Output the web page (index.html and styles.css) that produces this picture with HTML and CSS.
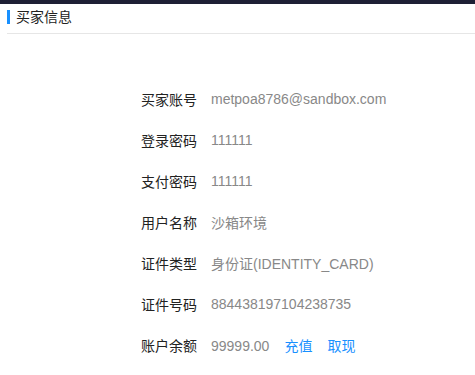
FILE: index.html
```html
<!DOCTYPE html>
<html lang="zh-CN">
<head>
<meta charset="utf-8">
<link rel="stylesheet" href="styles.css">
</head>
<body>
<div class="topbar"></div>
<div class="header"><span class="title">买家信息</span></div>
<div class="info">
  <div class="label">买家账号</div><div class="value">metpoa8786@sandbox.com</div>
  <div class="label">登录密码</div><div class="value">111111</div>
  <div class="label">支付密码</div><div class="value">111111</div>
  <div class="label">用户名称</div><div class="value">沙箱环境</div>
  <div class="label">证件类型</div><div class="value">身份证(IDENTITY_CARD)</div>
  <div class="label">证件号码</div><div class="value">884438197104238735</div>
  <div class="label">账户余额</div><div class="value">99999.00<a class="link">充值</a><a class="link">取现</a></div>
</div>
</body>
</html>
```
FILE: styles.css
```css
html, body {
  margin: 0;
  padding: 0;
  background: #fff;
  font-family: "Liberation Sans", "Noto Sans CJK SC", sans-serif;
  font-size: 14px;
}
.topbar {
  height: 4px;
  background: #1e2035;
}
.header {
  margin-left: 7px;
  height: 29px;
  border-bottom: 1px solid #e6e6e6;
  display: flex;
  align-items: center;
}
.title {
  border-left: 3px solid #1890ff;
  padding-left: 6px;
  line-height: 14px;
  color: #222;
  font-size: 14px;
  margin-top: -4px;
}
.info {
  display: grid;
  grid-template-columns: 190px auto;
  column-gap: 14px;
  grid-auto-rows: 41px;
  align-items: center;
  padding-top: 44px;
  padding-left: 7px;
}
.label {
  text-align: right;
  color: #222;
}
.value {
  color: #888;
}
.link {
  color: #1890ff;
  margin-left: 15px;
  cursor: pointer;
}
```
